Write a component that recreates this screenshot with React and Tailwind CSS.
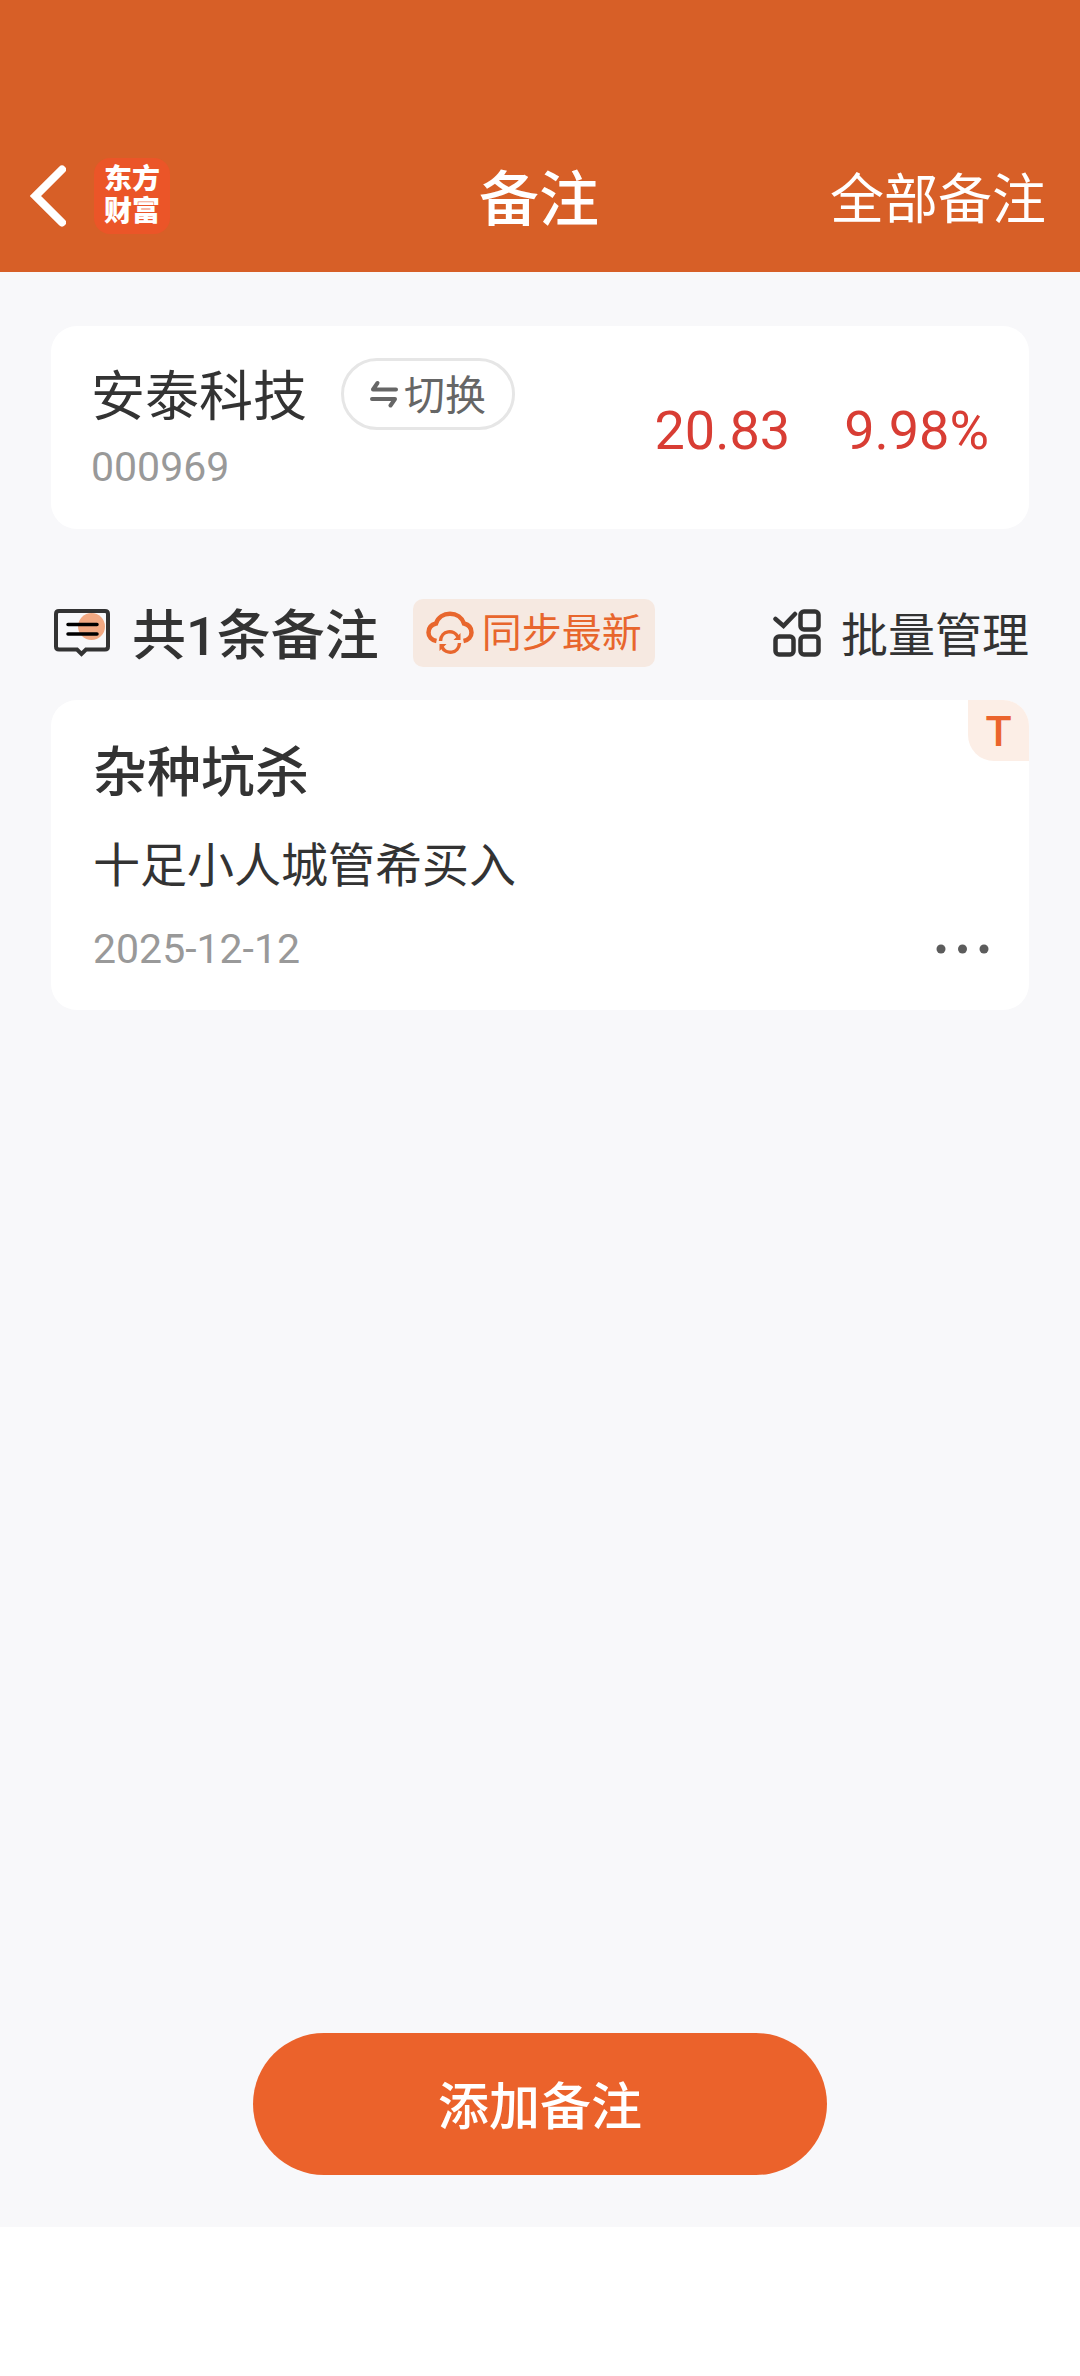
import React, { useState } from "react";

const notes = [
  {
    id: 1,
    tag: "T",
    title: "杂种坑杀",
    content: "十足小人城管希买入",
    date: "2025-12-12",
  },
];

const BackIcon = () => (
  <svg className="w-9 h-16" viewBox="0 0 36 64" fill="none" stroke="#fff" strokeWidth="8">
    <path d="M32 5.500 L5.500 32 L32 58.500" strokeLinecap="round" strokeLinejoin="miter" />
  </svg>
);

const SwapIcon = () => (
  <svg className="w-7 h-7" viewBox="0 0 28 28" fill="none" stroke="#666" strokeWidth="4" strokeLinecap="round" strokeLinejoin="round">
    <path d="M26 9.500 H3 L7.500 3" />
    <path d="M2 19 H25 L20.500 25.500" />
  </svg>
);

const NoteIcon = () => (
  <svg className="w-14 h-12" viewBox="0 0 56 48" fill="none">
    <circle cx="37.500" cy="17.500" r="13.500" fill="#f2a983" />
    <path
      d="M5 2 H51 Q54 2 54 5 V37.500 Q54 40.500 51 40.500 H32 L27.500 45 L23 40.500 H5 Q2 40.500 2 37.500 V5 Q2 2 5 2 Z"
      stroke="#333"
      strokeWidth="4"
    />
    <path d="M14 15.500 H43 M14 25 H43" stroke="#000" strokeWidth="3.500" strokeLinecap="round" />
  </svg>
);

const CloudSyncIcon = () => (
  <svg className="w-12 h-11" viewBox="0 0 48 44" fill="none" stroke="#e8662d" strokeWidth="4.500">
    <path d="M10.500 30 C5.500 29 2.500 25.500 2.500 21.500 C2.500 16.500 6 13.500 10 12.500 C12 6.500 17.500 2.700 24 2.700 C30.500 2.700 36 6.500 38 12.500 C42 13.500 45.500 16.500 45.500 21.500 C45.500 25.500 42.500 29 37.500 30" />
    <path d="M14.500 30 C15 19 28.500 18 32 26" strokeWidth="3.500" />
    <path d="M33.500 32 C33 43 19.500 44 16 36" strokeWidth="3.500" />
    <path d="M34.500 22 V29 H27.500 Z M13.500 40 V33 H20.500 Z" fill="#e8662d" stroke="none" />
  </svg>
);

const BatchIcon = () => (
  <svg className="w-12 h-12" viewBox="0 0 48 48" fill="none" stroke="#333" strokeWidth="4.500">
    <path d="M2.500 10 L10.500 17 L22 5" strokeLinecap="round" />
    <rect x="27.500" y="2.500" width="18" height="18" rx="3.500" />
    <rect x="2.500" y="27.500" width="18" height="18" rx="3.500" />
    <rect x="27.500" y="27.500" width="18" height="18" rx="3.500" />
  </svg>
);

const MoreIcon = () => (
  <svg className="w-14 h-3" viewBox="0 0 56 12" fill="#5c5c5c">
    <circle cx="8" cy="6" r="4.500" />
    <circle cx="29.500" cy="6" r="4.500" />
    <circle cx="51" cy="6" r="4.500" />
  </svg>
);

const Header = () => (
  <header className="bg-[#d75f27] pt-[120px] text-white">
    <div className="grid grid-cols-[1fr_auto_1fr] items-center h-[152px] pl-[30px] pr-8">
      <div className="flex items-center gap-7">
        <button aria-label="返回">
          <BackIcon />
        </button>
        <div className="w-[76px] h-[76px] rounded-2xl bg-[#eb5528] flex items-center justify-center text-[28px] leading-8 font-black text-center">
          东方
          <br />
          财富
        </div>
      </div>
      <h1 className="pt-2.5 text-[60px] leading-[72px] font-medium">备注</h1>
      <a href="#all" className="justify-self-end pt-2.5 pr-0.5 text-[54px] leading-[64px]">
        全部备注
      </a>
    </div>
  </header>
);

const StockCard = () => (
  <section className="flex items-center justify-between bg-white rounded-[26px] px-10 pt-8 pb-[30px]">
    <div>
      <div className="flex items-center gap-[34px]">
        <h2 className="pt-2 text-[54px] leading-[64px] text-[#333]">安泰科技</h2>
        <button className="flex items-center gap-1.5 h-[72px] px-[26px] border-3 border-[#e6e6e6] rounded-full text-[41px] leading-[60px] text-[#666]">
          <SwapIcon />
          <span className="pt-1">切换</span>
        </button>
      </div>
      <p className="mt-[5px] text-[41px] leading-[64px] text-[#999]">000969</p>
    </div>
    <div className="flex gap-[54px] pt-1 text-[54px] leading-[64px] text-[#d83d34]">
      <span>20.83</span>
      <span>9.98%</span>
    </div>
  </section>
);

const NoteCard = ({ note }) => (
  <article className="relative bg-white rounded-[26px] overflow-hidden pl-[42px] pr-10 pt-9 pb-7">
    <span className="absolute top-0 right-0 w-[61px] h-[61px] rounded-bl-[26px] bg-[#fceee6] text-[#eb642c] text-[43px] leading-[62px] font-medium text-center">
      {note.tag}
    </span>
    <h3 className="text-[54px] leading-[76px] font-medium text-[#333]">{note.title}</h3>
    <p className="mt-5 text-[47px] leading-[68px] text-[#333]">{note.content}</p>
    <div className="mt-4 flex items-center justify-between text-[41px] leading-[66px] text-[#999]">
      <time>{note.date}</time>
      <button aria-label="更多">
        <MoreIcon />
      </button>
    </div>
  </article>
);

const App = () => {
  const [list] = useState(notes);

  return (
    <div className="min-h-screen flex flex-col bg-white font-['Roboto','Noto_Sans_CJK_SC',sans-serif]">
      <Header />

      <main className="flex-1 flex flex-col bg-[#f8f8fa] px-[51px] pt-[54px] pb-[52px]">
        <StockCard />

        {/* Notes toolbar */}
        <div className="mt-[70px] mb-[33px] flex items-center justify-between h-[68px]">
          <div className="flex items-center pl-[3px]">
            <NoteIcon />
            <h2 className="ml-[22px] pt-2 text-[54px] leading-[64px] font-medium text-[#333]">
              共{list.length}条备注
            </h2>
            <button className="ml-[34px] flex items-center gap-2 h-[68px] px-[13px] rounded-[10px] bg-[#f6e9e1] text-[40px] leading-[60px] text-[#e8662d]">
              <CloudSyncIcon />
              <span className="pt-0.5">同步最新</span>
            </button>
          </div>
          <button className="flex items-center gap-5 text-[47px] leading-[64px] text-[#333]">
            <BatchIcon />
            <span className="pt-1.5">批量管理</span>
          </button>
        </div>

        {list.map((note) => (
          <NoteCard key={note.id} note={note} />
        ))}

        <button className="mt-auto mx-auto w-[574px] h-[142px] pt-2 rounded-full bg-[#eb622b] text-white text-[51px] leading-[64px] font-medium">
          添加备注
        </button>
      </main>

      <footer className="h-[149px]" />
    </div>
  );
};

export default App;
